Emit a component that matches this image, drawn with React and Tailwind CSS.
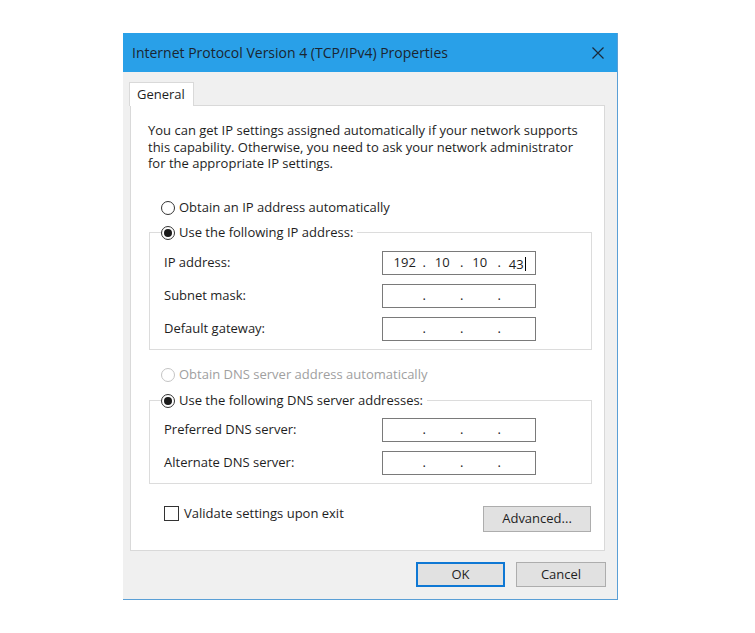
import React from "react";

const Radio = ({ checked, disabled }) => (
  <span
    className={`flex h-[14px] w-[14px] shrink-0 items-center justify-center rounded-full border bg-white ${
      disabled ? "border-[#c4c4c4]" : "border-[#333333]"
    }`}
  >
    {checked && <span className="h-[8px] w-[8px] rounded-full bg-[#1a1a1a]" />}
  </span>
);

const IpField = ({ parts = ["", "", "", ""], caret }) => (
  <div className="flex h-[24px] w-[154px] items-center border border-[#7a7a7a] bg-white pl-[4px]">
    {parts.map((p, i) => (
      <React.Fragment key={i}>
        <span className="w-[36px] text-center leading-none">
          {p}
          {caret && i === 3 && <span className="ml-[1px] inline-block h-[14px] w-[1px] translate-y-[2px] bg-black" />}
        </span>
        {i < 3 && <span className="w-[2px] text-center leading-none">.</span>}
      </React.Fragment>
    ))}
  </div>
);

const FieldRow = ({ label, field }) => (
  <div className="flex items-center">
    <span className="w-[218px]">{label}</span>
    {field}
  </div>
);

export default function App() {
  return (
    <div
      className="h-[633px] w-[755px] bg-white text-[13px] text-[#1e1e1e]"
      style={{ fontFamily: '"Open Sans", "Noto Sans", sans-serif' }}
    >
      <div className="pl-[123px] pt-[33px]">
        <div className="flex h-[567px] w-[495px] flex-col border-r border-b border-[#5a9fd6] bg-[#f0f0f0]">
          {/* title bar */}
          <div className="flex h-[39px] items-center justify-between bg-[#29a0e8] pl-[9px] pr-[13px]">
            <span className="text-[14px] text-[#1b2530]">Internet Protocol Version 4 (TCP/IPv4) Properties</span>
            <svg width="12" height="12" viewBox="0 0 12 12">
              <path d="M0.5 0.5 L11.5 11.5 M11.5 0.5 L0.5 11.5" stroke="#1b2a3a" strokeWidth="1.2" fill="none" />
            </svg>
          </div>

          {/* tab */}
          <div className="mt-[10px] pl-[6px]">
            <div className="relative z-10 -mb-px flex h-[24px] w-[65px] items-center border border-b-0 border-[#d9d9d9] bg-white pl-[7px]">
              General
            </div>
          </div>

          {/* panel */}
          <div className="ml-[7px] flex h-[446px] w-[475px] flex-col border border-[#d9d9d9] bg-white pl-[17px] pr-[13px] pt-[16px]">
            <p className="leading-[16.5px]">
              You can get IP settings assigned automatically if your network supports
              <br />
              this capability. Otherwise, you need to ask your network administrator
              <br />
              for the appropriate IP settings.
            </p>

            <div className="ml-[13px] mt-[28px] flex h-[16px] items-center gap-[4px]">
              <Radio />
              <span>Obtain an IP address automatically</span>
            </div>

            <fieldset className="ml-[1px] mt-[9px] w-[443px] border border-[#dcdcdc] pb-[8px] pl-[14px] pt-[10px]">
              <legend className="-ml-[3px] flex h-[16px] items-center gap-[4px] bg-white pr-[4px]">
                <Radio checked />
                <span>Use the following IP address:</span>
              </legend>
              <div className="flex flex-col gap-[9px]">
                <FieldRow label="IP address:" field={<IpField parts={["192", "10", "10", "43"]} caret />} />
                <FieldRow label="Subnet mask:" field={<IpField />} />
                <FieldRow label="Default gateway:" field={<IpField />} />
              </div>
            </fieldset>

            <div className="ml-[13px] mt-[17px] flex h-[16px] items-center gap-[4px] text-[#a0a0a0]">
              <Radio disabled />
              <span>Obtain DNS server address automatically</span>
            </div>

            <fieldset className="ml-[1px] mt-[10px] w-[443px] border border-[#dcdcdc] pb-[8px] pl-[14px] pt-[9px]">
              <legend className="-ml-[3px] flex h-[16px] items-center gap-[4px] bg-white pr-[4px]">
                <Radio checked />
                <span>Use the following DNS server addresses:</span>
              </legend>
              <div className="flex flex-col gap-[9px]">
                <FieldRow label="Preferred DNS server:" field={<IpField />} />
                <FieldRow label="Alternate DNS server:" field={<IpField />} />
              </div>
            </fieldset>

            <div className="mt-[22px] flex w-[443px] items-start justify-between">
              <div className="-mt-[2px] ml-[16px] flex items-center gap-[5px]">
                <span className="h-[15px] w-[15px] border border-[#333333] bg-white" />
                <span>Validate settings upon exit</span>
              </div>
              <button className="h-[26px] w-[108px] border border-[#adadad] bg-[#e1e1e1]">Advanced...</button>
            </div>
          </div>

          {/* bottom buttons */}
          <div className="mt-[11px] flex justify-end gap-[11px] pr-[11px]">
            <button className="h-[25px] w-[89px] border-2 border-[#0f78d4] bg-[#e1e1e1]">OK</button>
            <button className="h-[25px] w-[90px] border border-[#adadad] bg-[#e1e1e1]">Cancel</button>
          </div>
        </div>
      </div>
    </div>
  );
}
